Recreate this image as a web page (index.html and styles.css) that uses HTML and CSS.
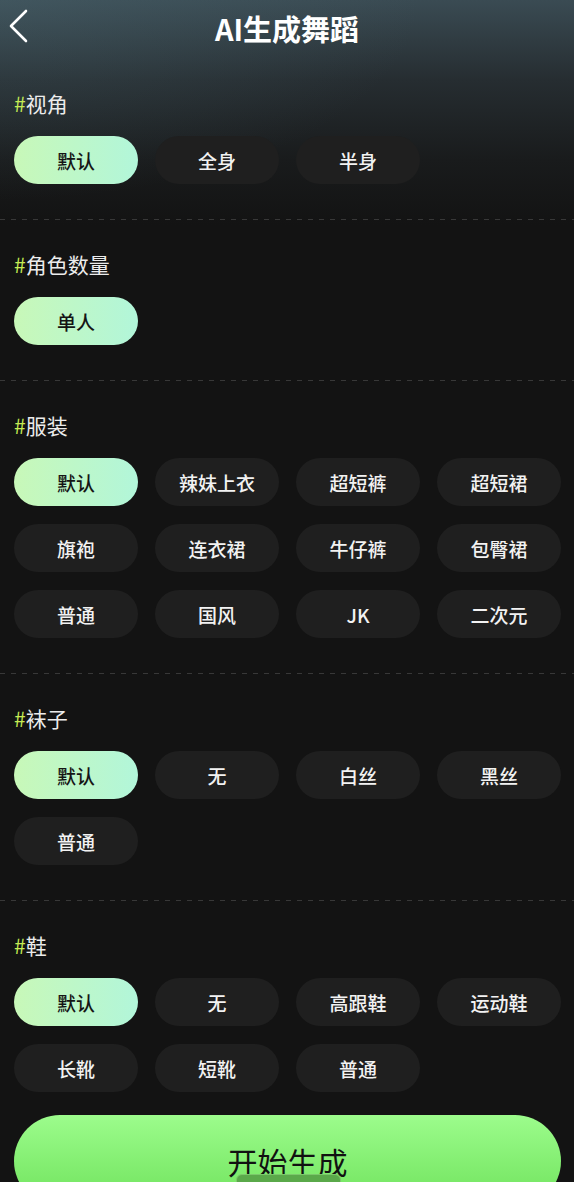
FILE: index.html
```html
<!DOCTYPE html>
<html>
<head>
  <meta charset="utf-8" />
  <title>AI生成舞蹈</title>
  <link rel="stylesheet" href="styles.css">
</head>
<body>
  <div class="page">
    <header class="top-bar">
      <svg class="back" width="24" height="36" viewBox="0 0 24 36">
        <polyline points="18,3 3,18 18,33" fill="none" stroke="#fff" stroke-width="2.6" stroke-linecap="round" stroke-linejoin="round" />
      </svg>
      <h1 class="title">AI生成舞蹈</h1>
    </header>

    <section class="section first">
      <div class="label"><span class="hash">#</span>视角</div>
      <div class="chips">
        <div class="chip active">默认</div>
        <div class="chip">全身</div>
        <div class="chip">半身</div>
      </div>
    </section>
    <div class="divider"></div>

    <section class="section">
      <div class="label"><span class="hash">#</span>角色数量</div>
      <div class="chips">
        <div class="chip active">单人</div>
      </div>
    </section>
    <div class="divider"></div>

    <section class="section">
      <div class="label"><span class="hash">#</span>服装</div>
      <div class="chips">
        <div class="chip active">默认</div>
        <div class="chip">辣妹上衣</div>
        <div class="chip">超短裤</div>
        <div class="chip">超短裙</div>
        <div class="chip">旗袍</div>
        <div class="chip">连衣裙</div>
        <div class="chip">牛仔裤</div>
        <div class="chip">包臀裙</div>
        <div class="chip">普通</div>
        <div class="chip">国风</div>
        <div class="chip">JK</div>
        <div class="chip">二次元</div>
      </div>
    </section>
    <div class="divider"></div>

    <section class="section">
      <div class="label"><span class="hash">#</span>袜子</div>
      <div class="chips">
        <div class="chip active">默认</div>
        <div class="chip">无</div>
        <div class="chip">白丝</div>
        <div class="chip">黑丝</div>
        <div class="chip">普通</div>
      </div>
    </section>
    <div class="divider"></div>

    <section class="section last">
      <div class="label"><span class="hash">#</span>鞋</div>
      <div class="chips">
        <div class="chip active">默认</div>
        <div class="chip">无</div>
        <div class="chip">高跟鞋</div>
        <div class="chip">运动鞋</div>
        <div class="chip">长靴</div>
        <div class="chip">短靴</div>
        <div class="chip">普通</div>
      </div>
    </section>

    <div class="footer">
      <button type="button" class="start">开始生成<span class="indicator"></span></button>
    </div>
  </div>
</body>
</html>
```

FILE: styles.css
```css
body {
  margin: 0;
  padding: 0;
  background: #131313;
  font-family: "Noto Sans CJK SC", "Noto Sans", sans-serif;
  color: #f0f0f0;
}

.page {
  width: 574px;
  height: 1182px;
  overflow: hidden;
  background:
    radial-gradient(ellipse 420px 200px at 0 0, rgba(80, 110, 120, 0.3), rgba(80, 110, 120, 0)),
    linear-gradient(180deg, #3a4b53 0px, #262d31 80px, #191b1c 160px, #131313 225px);
}

.top-bar {
  position: relative;
  height: 56px;
  display: flex;
  align-items: center;
  justify-content: center;
}

.back {
  position: absolute;
  left: 8px;
  top: 8px;
}

.title {
  margin: 0;
  font-size: 29px;
  font-weight: 700;
  line-height: 56px;
  color: #fff;
}

.section {
  padding: 30px 13px 35px 14px;
}

.section.first {
  padding-top: 33px;
}

.section.last {
  padding-bottom: 23px;
}

.label {
  font-size: 21px;
  line-height: 28px;
  margin-bottom: 19px;
  color: #ececec;
}

.hash {
  color: #c6ec55;
}

.chips {
  display: grid;
  grid-template-columns: repeat(4, 124px);
  column-gap: 17px;
  row-gap: 18px;
}

.chip {
  height: 48px;
  border-radius: 24px;
  background: #1f1f1f;
  display: flex;
  align-items: center;
  justify-content: center;
  font-size: 19px;
  font-weight: 500;
  color: #f2f2f2;
}

.chip.active {
  background: linear-gradient(90deg, #c8f8b8, #b2f6da);
  color: #151515;
}

.divider {
  height: 1px;
  background-image: linear-gradient(90deg, #383838 0 5px, transparent 5px 11px);
  background-size: 11px 1px;
}

.footer {
  padding: 0 13px 0 14px;
}

.start {
  position: relative;
  width: 100%;
  height: 92px;
  border: none;
  border-radius: 46px;
  background: linear-gradient(180deg, #9cfc8c, #6fe25b);
  color: #111;
  font-family: "Noto Sans CJK SC", sans-serif;
  font-size: 30px;
  padding: 0;
}

.indicator {
  position: absolute;
  left: 222px;
  top: 59px;
  width: 103px;
  height: 24px;
  border-radius: 6px;
  background: #5aa94a;
  border: 1px solid #7bc86a;
}
```
